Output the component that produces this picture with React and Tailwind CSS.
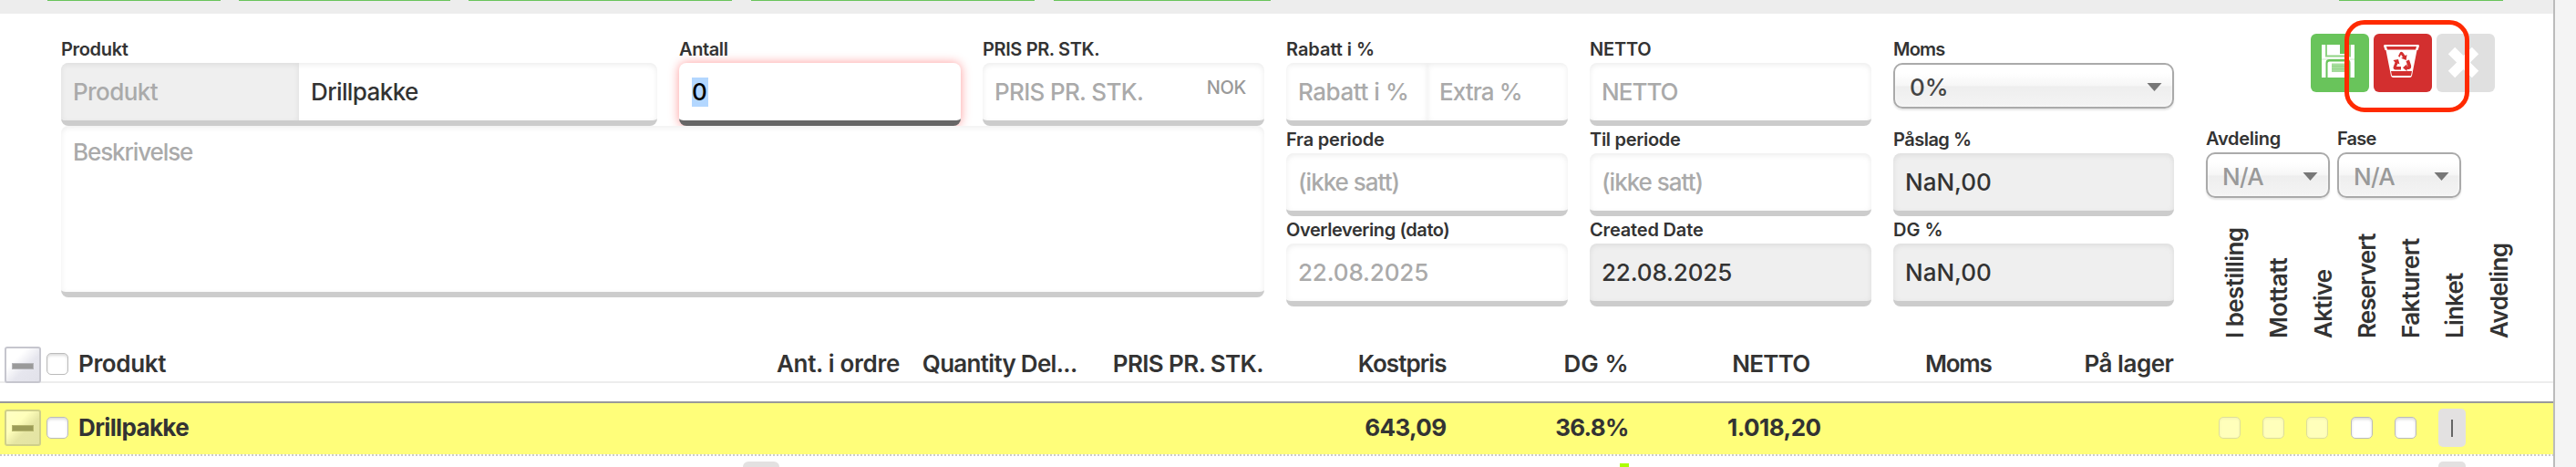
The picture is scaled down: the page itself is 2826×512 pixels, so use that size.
import clsx from "clsx";

const TOP_TABS = [
  "ml-[52px] w-[190px]",
  "ml-5 w-[232px]",
  "ml-5 w-[289px]",
  "ml-[21px] w-[311px]",
  "ml-[21px] w-[238px]",
  "ml-[1172px] w-[180px]",
];

function TopBar() {
  return (
    <div className="flex h-[15px] shrink-0 items-start bg-[#ededed]">
      {TOP_TABS.map((c) => (
        <div key={c} className={clsx("h-px shrink-0 bg-[#69c45b]", c)} />
      ))}
    </div>
  );
}

function Label({ children, className }) {
  return (
    <div className={clsx("h-[27px] text-[20px] leading-6 font-semibold whitespace-nowrap text-[#333]", className)}>
      {children}
    </div>
  );
}

const boxBase =
  "flex h-[69px] items-center overflow-hidden whitespace-nowrap rounded-lg border-b-[6px] border-[#ccc] text-[26px] leading-8 font-[450]";
const insetShadow = "shadow-[inset_0_2px_6px_rgba(0,0,0,0.08)]";

function Field({ label, labelClass, text, textClass, muted, disabled, className }) {
  return (
    <div className={clsx("flex flex-col", className)}>
      <Label className={labelClass}>{label}</Label>
      <div
        className={clsx(
          boxBase,
          insetShadow,
          "pl-[13px]",
          disabled ? "bg-[#efefef]" : "bg-white",
          muted ? "text-[#aaa]" : "text-[#333]",
          textClass
        )}
      >
        {text}
      </div>
    </div>
  );
}

function Caret() {
  return (
    <svg className="h-[9px] w-[17px] shrink-0" viewBox="0 0 17 9">
      <path d="M0.5 0h16L8.5 9z" fill="#777" />
    </svg>
  );
}

function Select({ text, className }) {
  return (
    <div
      className={clsx(
        "flex h-[50px] items-center justify-between rounded-[10px] border-2 border-[#aaa] bg-[linear-gradient(#fff_20%,#f6f6f6_50%,#eee_52%,#f4f4f4_100%)] pr-[11px] pl-4 text-[26px] leading-8 font-[450] shadow-[inset_0_0_3px_#fff,0_2px_2px_rgba(0,0,0,0.1)]",
        className
      )}
    >
      <span className="pt-[3px]">{text}</span>
      <span className="pt-0.5">
        <Caret />
      </span>
    </div>
  );
}

function SaveIcon() {
  return (
    <svg className="h-9 w-9" viewBox="0 0 36 36">
      <path d="M0 0h36v36H0z" fill="#fff" />
      <path d="M4 0h2v11.5h24V0h2v13.5H4z" fill="#8fd384" />
      <path d="M20 0h10v10H20z" fill="#69c45b" />
      <path d="M0 15.500h36v1H0z" fill="#c9eac4" />
      <path d="M4.500 36V20q0-4 4-4h19q4 0 4 4v16h-2V20.500q0-2-2-2h-19q-2 0-2 2V36z" fill="#69c45b" />
      <path d="M11 20.500h14v9.500H11z" fill="#a5dc9c" />
      <path d="M11 23.500h14M11 26.700h14" stroke="#8fd384" strokeWidth="0.8" />
    </svg>
  );
}

function RecycleBinIcon() {
  return (
    <svg className="h-9 w-[39px]" viewBox="0 0 39 36">
      <path d="M1 0h37q1 0 1 1.500L37.500 6h-1L31 34q-.5 2-2.500 2h-18Q8.500 36 8 34L2.500 6h-1L0 1.500Q0 0 1 0z" fill="#fff" />
      <path d="M3 2h33l-1 3.500H4zM8 29h23l-1 5H9z" fill="#d32f2f" />
      <g fill="#d32f2f">
        <path d="M16 12.500l2-4q1-1.300 3 0l2.500 3.500 2-1-.8 6-5.500-2.300 1.800-1-2-3-1.500 3z" />
        <path d="M10.500 17l5.500-1 1.500 5.500-2-1-1.500 3.500h5v3.500h-6.500q-2.500-.6-1.800-3.200l1.800-4.800z" />
        <path d="M24.500 18l3.500-1.500 2 6q.8 3.500-2 4.500h-2.500v2L21 25.200l4.500-4v2.300h1z" />
      </g>
    </svg>
  );
}

function CrossIcon() {
  return (
    <svg className="h-[35px] w-[35px]" viewBox="0 0 35 35">
      <path d="M4.500 4.500l26 26M30.500 4.500l-26 26" stroke="#fff" strokeWidth="10.500" />
    </svg>
  );
}

function ActionButtons() {
  return (
    <div className="relative -mt-[5px] ml-[115px] flex h-16 gap-[5px]">
      <div className="flex w-16 items-center justify-center rounded-md bg-[#69c45b] pr-1 pb-1">
        <SaveIcon />
      </div>
      <div className="flex w-16 items-center justify-center rounded-md bg-[#d32f2f] pr-1 pb-1">
        <RecycleBinIcon />
      </div>
      <div className="flex w-16 items-center justify-center rounded-md bg-[#e0e0e0] pr-1.5 pb-0.5">
        <CrossIcon />
      </div>
      <div className="absolute -top-[15px] left-[37px] h-[101px] w-[137px] rounded-[22px] border-[5px] border-[#ff2a00]" />
    </div>
  );
}

const FLAG_HEADERS = [
  ["I bestilling", "tracking-[-0.56px]"],
  ["Mottatt", "tracking-[-0.21px]"],
  ["Aktive", "tracking-[-0.73px]"],
  ["Reservert", "tracking-[-0.89px]"],
  ["Fakturert", "tracking-[-0.58px]"],
  ["Linket", "tracking-[-0.78px]"],
  ["Avdeling", "tracking-[-0.6px]"],
];

function LeftForm() {
  return (
    <div className="flex w-[1320px] flex-col">
      <div className="flex gap-6">
        <div className="w-[654px]">
          <Label className="tracking-[-0.32px]">Produkt</Label>
          <div className={clsx(boxBase, "bg-white", insetShadow)}>
            <div className="flex h-full w-[261px] items-center bg-[#efefef] pl-[13px] tracking-[-0.58px] text-[#aaa] shadow-[inset_0_2px_6px_rgba(0,0,0,0.08)]">
              Produkt
            </div>
            <div className="pl-[13px] tracking-[-0.6px] text-[#333]">Drillpakke</div>
          </div>
        </div>
        <div className="w-[309px]">
          <Label className="tracking-[-0.4px]">Antall</Label>
          <div className="flex h-[69px] items-center rounded-lg border-b-[6px] border-[#666] bg-white pl-3.5 text-[26px] leading-8 font-[450] text-black shadow-[0_0_12px_rgba(255,0,0,0.4)]">
            <span className="w-[18px] bg-[#b3d7ff]">0</span>
          </div>
        </div>
        <div className="w-[309px]">
          <Label className="tracking-[-0.38px]">PRIS PR. STK.</Label>
          <div className={clsx(boxBase, insetShadow, "justify-between bg-white pr-5 pl-[13px] text-[#aaa]")}>
            <span className="tracking-[-0.68px]">PRIS PR. STK.</span>
            <span className="pb-2.5 text-[20px] leading-6 tracking-[-0.35px] text-[#999]">NOK</span>
          </div>
        </div>
      </div>
      <div className="relative h-[188px] rounded-lg border-b-[6px] border-[#ccc] bg-white pt-[9px] pl-[13px] text-[26px] leading-10 font-[450] tracking-[-1.1px] text-[#aaa] shadow-[inset_0_2px_6px_rgba(0,0,0,0.07)]">
        Beskrivelse
      </div>
    </div>
  );
}

function MiddleForm() {
  return (
    <div className="grid grid-cols-[309px_309px_308px] content-start gap-x-6 gap-y-[3px]">
      <div>
        <Label className="tracking-[-0.05px]">Rabatt i %</Label>
        <div className={clsx(boxBase, "bg-white")}>
          <div className="flex h-full w-[155px] items-center pl-[13px] tracking-[-0.45px] text-[#aaa] shadow-[inset_0_2px_6px_rgba(0,0,0,0.08)]">
            Rabatt i %
          </div>
          <div className="flex h-full w-[154px] items-center pl-[13px] tracking-[-0.9px] text-[#aaa] shadow-[inset_0_2px_6px_rgba(0,0,0,0.08)]">
            Extra %
          </div>
        </div>
      </div>
      <Field label="NETTO" labelClass="tracking-[-0.19px]" text="NETTO" textClass="tracking-[-0.98px]" muted />
      <div>
        <Label className="tracking-[-0.78px]">Moms</Label>
        <Select text="0%" className="text-[#444]" />
      </div>
      <Field label="Fra periode" labelClass="tracking-[-0.2px]" text="(ikke satt)" textClass="tracking-[-1px]" muted />
      <Field label="Til periode" labelClass="tracking-[-0.31px]" text="(ikke satt)" textClass="tracking-[-1px]" muted />
      <Field label="Påslag %" labelClass="tracking-[-0.51px]" text="NaN,00" disabled />
      <Field label="Overlevering (dato)" labelClass="tracking-[-0.42px]" text="22.08.2025" textClass="tracking-[-0.15px]" muted />
      <Field label="Created Date" labelClass="tracking-[-0.17px]" text="22.08.2025" textClass="tracking-[-0.15px]" disabled />
      <Field label="DG %" text="NaN,00" disabled />
    </div>
  );
}

function RightForm() {
  return (
    <div className="flex w-[381px] flex-col">
      <ActionButtons />
      <div className="mt-[39px] flex gap-2">
        <div className="w-[136px]">
          <Label className="tracking-[-0.26px]">Avdeling</Label>
          <Select text="N/A" className="tracking-[-0.65px] text-[#999]" />
        </div>
        <div className="w-[136px]">
          <Label className="tracking-[-0.79px]">Fase</Label>
          <Select text="N/A" className="tracking-[-0.65px] text-[#999]" />
        </div>
      </div>
      <div className="mt-[24px] flex h-[130px] pl-2">
        {FLAG_HEADERS.map(([t, c]) => (
          <div
            key={t}
            className={clsx(
              "w-[48.3px] shrink-0 rotate-180 text-[26px] leading-[48px] font-semibold whitespace-nowrap text-[#333] [writing-mode:vertical-rl]",
              c
            )}
          >
            {t}
          </div>
        ))}
      </div>
    </div>
  );
}

function CollapseButton({ tinted, className }) {
  return (
    <div
      className={clsx(
        "flex h-10 w-10 shrink-0 items-center justify-center rounded-[3px] border-2",
        tinted
          ? "border-[#cfcf8a] bg-[linear-gradient(135deg,#ffffc4_0%,#ffffbb_35%,#e6e6a4_60%,#e3e3a4_100%)]"
          : "border-[#c6c6ce] bg-[linear-gradient(135deg,#fff_0%,#fff_30%,#e6e6ee_60%,#e2e2ea_100%)]",
        className
      )}
    >
      <div className={clsx("mt-0.5 h-[7px] w-6 border", tinted ? "border-[#b5b56c] bg-[#9c9c58]" : "border-[#b4b4b8] bg-[#9a9a9a]")} />
    </div>
  );
}

function Checkbox({ faded, className }) {
  return (
    <div
      className={clsx(
        "h-6 w-6 shrink-0 rounded-[5px] border",
        faded
          ? "border-[#dede9c] bg-[#ffffbb] shadow-[inset_0_1px_3px_rgba(0,0,0,0.06)]"
          : "border-[#bbb] bg-white shadow-[inset_0_2px_3px_rgba(0,0,0,0.14)]",
        className
      )}
    />
  );
}

const COLUMNS = [
  ["Ant. i ordre", "w-[201px] tracking-[-0.3px]"],
  ["Quantity Del...", "w-[194.5px] tracking-[-0.7px]"],
  ["PRIS PR. STK.", "w-[204.5px] tracking-[-0.6px]"],
  ["Kostpris", "w-[200.5px] tracking-[-0.95px]"],
  ["DG %", "w-[200px]"],
  ["NETTO", "w-[199px] tracking-[-0.75px]"],
  ["Moms", "w-[199px] tracking-[-1.25px]"],
  ["På lager", "w-[200px] tracking-[-0.45px]"],
];

function TableHeader() {
  return (
    <div className="flex h-[41px] shrink-0 items-center border-b-2 border-[#ededed] pl-[5px] text-[26px] leading-8 font-semibold whitespace-nowrap text-[#333]">
      <CollapseButton className="mt-[3px]" />
      <Checkbox className="ml-1.5" />
      <div className="w-[711px] pl-[11px] tracking-[-0.35px]">Produkt</div>
      {COLUMNS.map(([t, c]) => (
        <div key={t} className={clsx("shrink-0 text-right", c)}>
          {t}
        </div>
      ))}
    </div>
  );
}

function TableRow() {
  return (
    <div className="mt-5 h-[60px] shrink-0 border-t-2 border-t-[#999] bg-[#fffe7a]">
      <div className="flex h-[53px] items-center pl-[5px] text-[26px] leading-8 font-bold whitespace-nowrap text-[#333]">
        <CollapseButton tinted />
        <Checkbox className="ml-1.5" />
        <div className="w-[711px] pl-[11px] tracking-[-0.65px]">Drillpakke</div>
        <div className="w-[800.5px] text-right tracking-[-0.65px]">643,09</div>
        <div className="w-[200px] text-right tracking-[-0.8px]">36.8%</div>
        <div className="w-[211px] text-right tracking-[-0.54px]">1.018,20</div>
        <div className="ml-[436px] flex items-center gap-6">
          <Checkbox faded />
          <Checkbox faded />
          <Checkbox faded />
          <Checkbox className="ml-px" />
          <Checkbox />
          <div className="flex h-[42px] w-[30px] items-center justify-center rounded-[5px] bg-[#e3e1e1] pt-0.5">
            <div className="h-[19px] w-0.5 bg-[#666]" />
          </div>
        </div>
      </div>
      <div className="mt-[3px] h-0.5 bg-[repeating-linear-gradient(90deg,#ccc_0_2px,#fff_2px_4px)]" />
    </div>
  );
}

function NextRow() {
  return (
    <div className="flex h-3 shrink-0 items-end overflow-hidden">
      <div className="ml-[815px] h-1.5 w-10 rounded-t-md bg-[#e3e1e1]" />
      <div className="ml-[922px] h-1 w-2.5 bg-[#af0]" />
      <div className="ml-[888px] h-1.5 w-[30px] rounded-t-[5px] bg-[#e3e1e1]" />
    </div>
  );
}

export default function App() {
  return (
    <div className="flex h-[512px] w-[2826px] overflow-hidden bg-[#f4f4f4] font-['Inter',sans-serif]">
      <div className="flex w-[2803px] shrink-0 flex-col border-r-2 border-[#bbb] bg-white">
        <TopBar />
        <div className="flex h-[364px] shrink-0 pt-[27px] pl-[67px]">
          <LeftForm />
          <div className="ml-6">
            <MiddleForm />
          </div>
          <div className="ml-[35px]">
            <RightForm />
          </div>
        </div>
        <TableHeader />
        <TableRow />
        <NextRow />
      </div>
    </div>
  );
}
